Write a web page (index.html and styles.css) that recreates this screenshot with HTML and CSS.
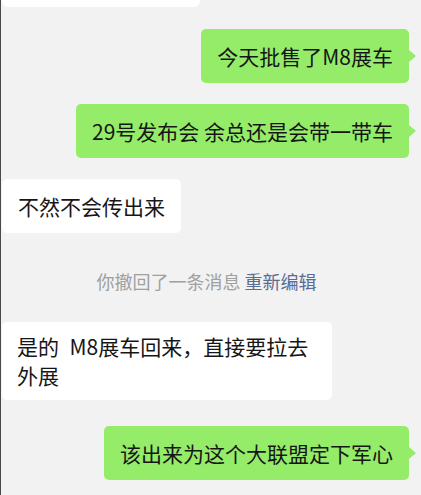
FILE: index.html
```html
<!DOCTYPE html>
<html lang="zh-CN">
<head>
<meta charset="utf-8">
<link rel="stylesheet" href="styles.css">
</head>
<body>
<div class="chat">
  <div class="row left"><div class="bubble white partial"></div></div>
  <div class="row right gap22"><div class="bubble green">今天批售了M8展车</div></div>
  <div class="row right gap21"><div class="bubble green">29号发布会 余总还是会带一带车</div></div>
  <div class="row left gap21"><div class="bubble white">不然不会传出来</div></div>
  <div class="recall">你撤回了一条消息 <span class="link">重新编辑</span></div>
  <div class="row left gap29"><div class="bubble white wide">是的&ensp;M8展车回来，直接要拉去外展</div></div>
  <div class="row right gap26"><div class="bubble green">该出来为这个大联盟定下军心</div></div>
</div>
</body>
</html>
```
FILE: styles.css
```css
html, body {
  margin: 0;
  padding: 0;
  background: #f2f2f2;
}
.chat {
  min-height: 495px;
  border-left: 1px solid #4a4a4a;
  display: flex;
  flex-direction: column;
  font-family: "Noto Sans CJK SC", "Noto Sans", sans-serif;
  font-size: 21px;
  color: #161616;
  box-sizing: border-box;
}
.row {
  display: flex;
}
.row.left {
  justify-content: flex-start;
  padding-left: 1px;
}
.row.right {
  justify-content: flex-end;
  padding-right: 12px;
}
.gap22 { margin-top: 22px; }
.gap21 { margin-top: 21px; }
.gap29 { margin-top: 29px; }
.gap26 { margin-top: 26px; }
.bubble {
  position: relative;
  box-sizing: border-box;
  min-height: 54px;
  padding: 10px 16px;
  line-height: 29px;
  border-radius: 5px;
  display: flex;
  align-items: center;
  white-space: nowrap;
}
.bubble.white {
  background: #ffffff;
}
.bubble.green {
  background: #95ec69;
}
.bubble.green::after {
  content: "";
  position: absolute;
  right: -7px;
  top: 50%;
  margin-top: -6px;
  border-left: 7px solid #95ec69;
  border-top: 6px solid transparent;
  border-bottom: 6px solid transparent;
}
.bubble.partial {
  min-height: 0;
  height: 7px;
  width: 198px;
  padding: 0;
  border-radius: 0 0 6px 6px;
}
.bubble.wide {
  white-space: normal;
  width: 330px;
  padding: 10px 14px 10px 15px;
}
.recall {
  margin-top: 36px;
  text-align: center;
  font-size: 18px;
  line-height: 24px;
  color: #a0a0a0;
  padding-right: 9px;
}
.recall .link {
  color: #5a6b94;
}
```
